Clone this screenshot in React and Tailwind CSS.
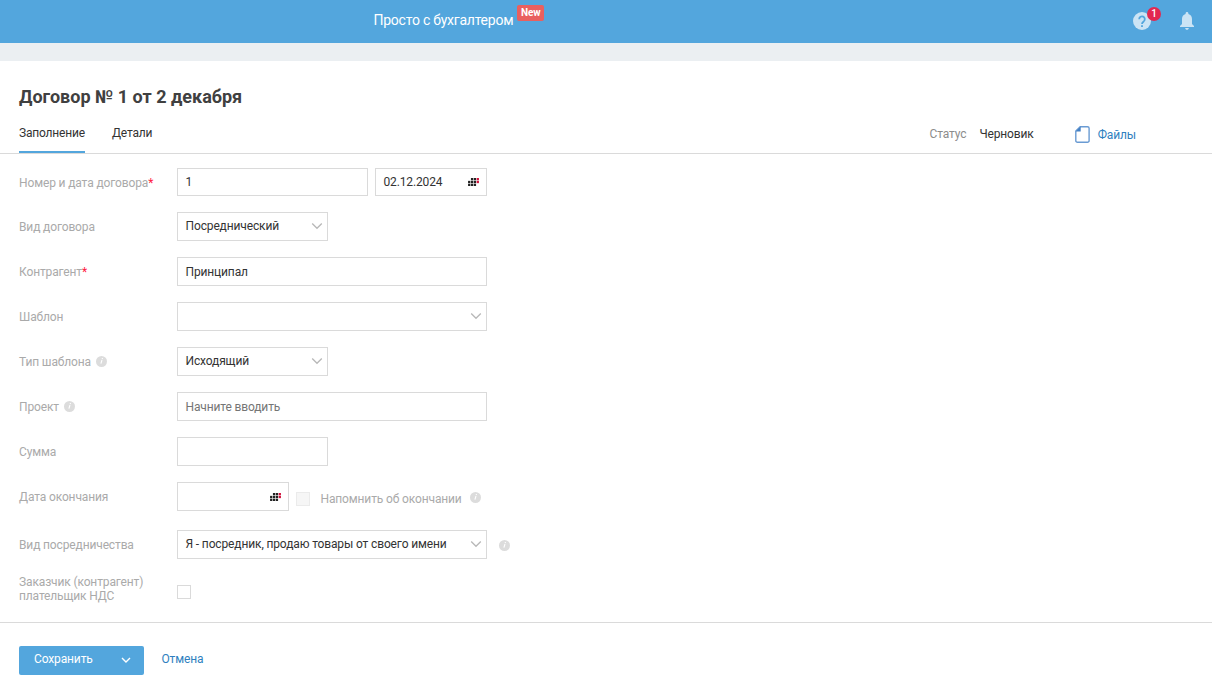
import React from "react";

const TABS = [
  { id: "fill", label: "Заполнение" },
  { id: "details", label: "Детали" },
];

// 12px-wide chevron used in every select
function Chevron() {
  return (
    <svg width="12" height="8" viewBox="0 0 12 8" fill="none" stroke="#b8b8b8" strokeWidth="1.3" className="-mt-px mr-px shrink-0">
      <path d="M1.200 1.500L6 6.300l4.800-4.800" />
    </svg>
  );
}

function CalendarIcon() {
  const dots = [
    [3, 0, "#222"], [6, 0, "#222"], [9, 0, "#d0103a"],
    [0, 3, "#222"], [3, 3, "#222"], [6, 3, "#222"], [9, 3, "#d0103a"],
    [0, 6, "#222"], [3, 6, "#222"], [6, 6, "#222"],
  ];
  return (
    <svg width="11" height="8" viewBox="0 0 11.400 8.400" className="shrink-0">
      {dots.map(([x, y, color]) => (
        <rect key={`${x}-${y}`} x={x} y={y} width="2.4" height="2.4" fill={color} />
      ))}
    </svg>
  );
}

function Hint({ className = "" }) {
  return (
    <svg width="11" height="11" viewBox="0 0 11 11" className={`shrink-0 ${className}`}>
      <circle cx="5.5" cy="5.5" r="5.5" fill="#dcdcdc" />
      <path d="M6.500 2L6.200 3.200M6 4L4.900 7.600" stroke="#fff" strokeWidth="1.1" />
    </svg>
  );
}

function Box({ className = "", children }) {
  return (
    <div className={`flex items-center justify-between border border-[#dadada] bg-white pl-[7.5px] text-[#333] ${className}`}>
      {children}
    </div>
  );
}

function Select({ value, className }) {
  return (
    <Box className={`h-[29px] pr-[3px] ${className}`}>
      <span className="-mt-px">{value}</span>
      <Chevron />
    </Box>
  );
}

function Row({ label, required, hint, className = "", children }) {
  return (
    <div className={`flex items-center ${className}`}>
      <div className="flex w-[158px] shrink-0 items-center gap-[5px] text-[#aaa]">
        <span className={required ? "pt-px" : ""}>
          {label}
          {required && <span className="text-[#ff1a40]">*</span>}
        </span>
        {hint && <Hint />}
      </div>
      {children}
    </div>
  );
}

function Header() {
  return (
    <header className="flex h-[43px] bg-[#53a6dd] tracking-normal text-white">
      <div className="flex flex-1 pl-[373.5px]">
        <span className="pt-[10px] text-sm leading-5 tracking-[-0.24px]">Просто с бухгалтером</span>
        <span className="ml-1 mt-[5px] h-4 w-[27px] rounded-[2px] bg-[#e9605f] text-center text-[10px] font-bold leading-4">New</span>
      </div>
      <div className="relative mt-3 mr-[29px] h-[18px] w-[18px]">
        <svg width="18" height="18" viewBox="0 0 18 18">
          <circle cx="9" cy="9" r="9" fill="#cbe4f5" />
          <path d="M6.200 7.200a2.800 2.800 0 1 1 4.500 2.200C9.600 10.200 9 10.700 9 12" fill="none" stroke="#53a6dd" strokeWidth="1.8" />
          <rect x="8.100" y="13.200" width="1.800" height="1.800" fill="#53a6dd" />
        </svg>
        <span className="absolute -top-[5px] left-[14px] h-[14px] w-[14px] rounded-full bg-[#e22850] text-center text-[10px] font-medium leading-[14px]">1</span>
      </div>
      <svg width="14" height="18" viewBox="0 0 14 18" className="mt-3 mr-[18px]" fill="#cbe4f5">
        <path d="M7 0c.8 0 1.400.6 1.400 1.400v.5C10.700 2.500 12 4.500 12 7v5l2 2v1H0v-1l2-2V7c0-2.500 1.300-4.500 3.600-5.100v-.5C5.600.6 6.200 0 7 0zM5.200 16h3.600c0 1-.8 1.800-1.800 1.800S5.200 17 5.200 16z" />
      </svg>
    </header>
  );
}

function TabBar() {
  return (
    <div className="flex h-[37px] justify-between border-b border-[#dadada] pl-[19px]">
      <nav className="flex gap-[27px]">
        {TABS.map((tab) => (
          <button
            key={tab.id}
            className={`flex h-9 items-start border-b-2 pt-2 leading-4 tracking-[-0.18px] text-[#333] ${tab.id === "fill" ? "border-[#53a6dd]" : "border-transparent"}`}
          >
            {tab.label}
          </button>
        ))}
      </nav>
      <div className="flex items-start pt-[9px] pr-[76px] leading-4">
        <span className="text-[#8c8c8c]">Статус</span>
        <span className="ml-[13px] text-[#333]">Черновик</span>
        <svg width="15" height="17" viewBox="0 0 15 17" className="ml-[41px]" fill="none" stroke="#6a9bd3" strokeWidth="1.4">
          <path d="M5.200.7h7.300a1.600 1.600 0 0 1 1.600 1.600v12.400a1.600 1.600 0 0 1-1.600 1.600H2.400a1.600 1.600 0 0 1-1.600-1.600V5z" />
          <path d="M5.700.5v5H.7z" fill="#4480c4" stroke="none" />
        </svg>
        <a className="ml-2 mt-px text-[#2f7fc0]">Файлы</a>
      </div>
    </div>
  );
}

export default function App() {
  return (
    <div className="h-[681px] w-[1212px] overflow-hidden bg-white font-[Roboto,sans-serif] text-xs leading-[14px] tracking-[-0.135px]">
      <Header />
      <div className="h-[18px] bg-[#ebeff2]" />
      <h1 className="h-14 pt-[24px] pl-[19px] text-lg font-bold leading-6 tracking-normal text-[#404040]">Договор № 1 от 2 декабря</h1>
      <TabBar />

      <main className="flex h-[469px] flex-col gap-4 border-b border-[#dadada] pt-[14px] pl-[19px]">
        <Row label="Номер и дата договора" required className="h-7">
          <Box className="h-7 w-[191px]">1</Box>
          <Box className="ml-[7px] h-7 w-28 pr-[7px]">
            02.12.2024
            <CalendarIcon />
          </Box>
        </Row>
        <Row label="Вид договора">
          <Select value="Посреднический" className="w-[151px]" />
        </Row>
        <Row label="Контрагент" required>
          <Box className="h-[29px] w-[310px]">Принципал</Box>
        </Row>
        <Row label="Шаблон">
          <Select className="w-[310px]" />
        </Row>
        <Row label="Тип шаблона" hint>
          <Select value="Исходящий" className="w-[151px]" />
        </Row>
        <Row label="Проект" hint>
          <Box className="h-[29px] w-[310px] text-[#757575]">Начните вводить</Box>
        </Row>
        <Row label="Сумма">
          <Box className="h-[29px] w-[151px]" />
        </Row>
        <Row label="Дата окончания">
          <Box className="h-[29px] w-28 pr-[7px]">
            <span />
            <CalendarIcon />
          </Box>
          <span className="ml-[7px] mt-1 h-[14px] w-[14px] border border-[#ebebeb] bg-[#f6f6f6]" />
          <span className="mr-2 ml-[10.5px] mt-1 text-[#aaa]">Напомнить об окончании</span>
          <Hint className="mt-px" />
        </Row>
        <Row label="Вид посредничества" className="mt-[3px]">
          <Select value="Я - посредник, продаю товары от своего имени" className="mr-3 w-[310px]" />
          <Hint className="mt-[2px]" />
        </Row>
        <Row label="Заказчик (контрагент) плательщик НДС">
          <span className="mt-[6px] h-[14px] w-[14px] border border-[#dadada]" />
        </Row>
      </main>

      <footer className="flex pt-[23px] pl-[19px]">
        <button className="flex h-[29px] w-[125px] items-center rounded-[2px] bg-[#53a6dd] pl-[15px] text-white">
          <span className="-mt-[3px] w-[87px] text-left">Сохранить</span>
          <svg width="10" height="7" viewBox="0 0 10 7" fill="none" stroke="#fff" strokeWidth="1.4">
            <path d="M1 1l4 4 4-4" />
          </svg>
        </button>
        <a className="ml-[17.5px] mt-[6px] text-[#2f7fc0]">Отмена</a>
      </footer>
    </div>
  );
}
